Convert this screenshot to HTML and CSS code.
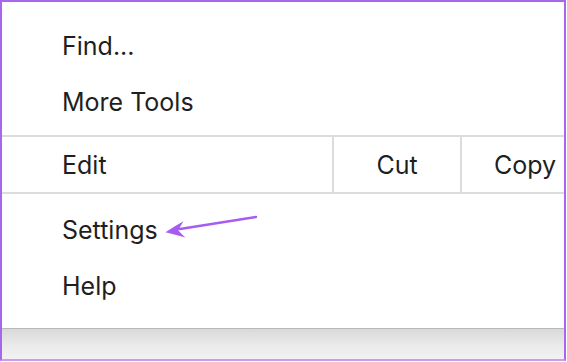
FILE: index.html
```html
<!DOCTYPE html>
<html>
<head>
<meta charset="utf-8">
<link rel="stylesheet" href="styles.css">
</head>
<body>
<div class="frame">
  <div class="section top">
    <div class="item">Find...</div>
    <div class="item">More Tools</div>
  </div>
  <div class="edit-row">
    <div class="cell edit">Edit</div>
    <div class="cell btn">Cut</div>
    <div class="cell btn">Copy</div>
  </div>
  <div class="section bottom">
    <div class="item">Settings</div>
    <div class="item">Help</div>
  </div>
  <div class="footer"></div>
  <svg class="arrow" width="567" height="362" viewBox="0 0 567 362">
    <path d="M256 217 L180 229" stroke="#a65cf0" stroke-width="2.4" stroke-linecap="round" fill="none"/>
    <path d="M165.5 232.2 Q175 226 183.5 221.3 Q180 226.5 178.5 230.6 Q181 234 185.5 237.6 Q175 234.5 165.5 232.2 Z" fill="#a65cf0"/>
  </svg>
</div>
</body>
</html>
```
FILE: styles.css
```css
html, body {
  margin: 0;
  padding: 0;
  background: #ffffff;
}
body {
  width: 567px;
  height: 362px;
  font-family: Inter, "Noto Sans", sans-serif;
  color: #1f1f1f;
}
.frame {
  position: relative;
  width: 566px;
  height: 361px;
  box-sizing: border-box;
  border: 2px solid #a866ee;
  border-bottom-color: #c99ef2;
  overflow: hidden;
  display: flex;
  flex-direction: column;
}
.section {
  display: flex;
  flex-direction: column;
}
.section.top {
  padding: 16px 0 5px;
}
.section.bottom {
  padding: 8px 0 14px;
}
.item {
  height: 56px;
  display: flex;
  align-items: center;
  padding-left: 60px;
  font-size: 25px;
}
.edit-row {
  display: flex;
  height: 55px;
  border-top: 2px solid #dcdcdc;
  border-bottom: 2px solid #dcdcdc;
  font-size: 25px;
}
.cell {
  display: flex;
  align-items: center;
  flex-shrink: 0;
}
.cell.edit {
  width: 270px;
  padding-left: 60px;
  border-right: 2px solid #dcdcdc;
}
.cell.btn {
  width: 126px;
  justify-content: center;
}
.cell.btn + .cell.btn {
  border-left: 2px solid #dcdcdc;
}
.footer {
  flex: 1;
  border-top: 1px solid #b9b9b9;
  background: linear-gradient(#d9d9d9, #ececec 60%, #f2f2f2);
}
.arrow {
  position: absolute;
  left: -2px;
  top: -2px;
  pointer-events: none;
}
```
